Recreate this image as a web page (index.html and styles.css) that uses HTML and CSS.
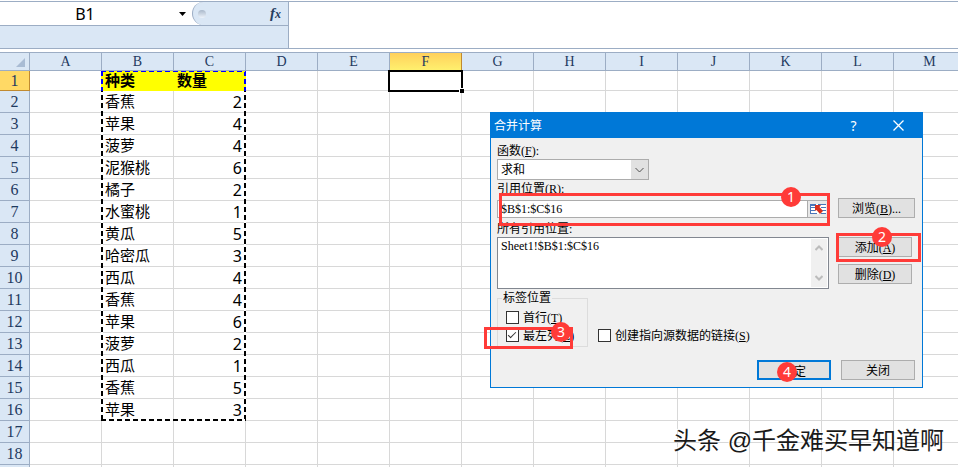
FILE: index.html
```
<!DOCTYPE html>
<html lang="zh-CN">
<head>
<meta charset="utf-8">
<title>合并计算</title>
<link rel="stylesheet" href="styles.css">
</head>
<body>
	<div class="formula-bar">
		<div class="name-area">
			<div class="name-row">
				<input class="name-box" type="text" value="B1" aria-label="名称框">
				<button class="name-arrow" aria-label="名称列表"><svg width="8" height="4" viewBox="0 0 8 4"><path d="M0 0h7L3.500 4z"/></svg></button>
				<div class="fx-area">
					<span class="knob"></span>
					<button class="fx" aria-label="插入函数">f<small>x</small></button>
				</div>
			</div>
		</div>
		<input class="formula" type="text" aria-label="编辑栏">
	</div>

	<div class="sheet">
		<table class="grid">
			<thead><tr id="letters"><th class="corner"><svg width="9" height="9" viewBox="0 0 9 9"><path d="M9 0v9H0z"/></svg></th></tr></thead>
			<tbody id="rows"></tbody>
		</table>
		<div class="ants"></div>
		<div class="cursor"></div>
	</div>

	<form class="dialog" onsubmit="return false">
		<div class="title">
			<span class="title-text">合并计算</span>
			<button class="title-btn" type="button">?</button>
			<button class="title-btn" type="button" aria-label="关闭"><svg width="11" height="11" viewBox="0 0 11 11"><path d="M.5.5l10 10M10.500.5l-10 10"/></svg></button>
		</div>
		<div class="body">
			<div class="main">
				<label for="func">函数(<u>F</u>):</label>
				<div class="select">
					<select id="func"><option>求和</option></select>
					<svg class="select-arrow" width="9" height="6" viewBox="0 0 9 6"><path d="M.5 1l4 4 4-4"/></svg>
				</div>
				<label for="ref">引用位置(<u>R</u>):</label>
				<div class="ref">
					<input id="ref" type="text" value="$B$1:$C$16">
					<button class="pick" type="button" aria-label="选择区域">
						<svg width="16" height="12" viewBox="0 0 16 12">
							<path fill="#fff" d="M0 1h16v10H0z"/>
							<path fill="#4a75b8" d="M0 1h6v2H0zM8 1h8v1H8zM0 4h5v1H0zM11 4h5v1h-5zM0 7h5v1H0zM12 7h4v1h-4zM0 10h7v1H0zM11 10h5v1h-5zM0 1h1v10H0z"/>
							<path fill="#d8301c" d="M5 2h6L9.500 4l3.500 4-3 3-3.500-4L5 8z"/>
						</svg>
					</button>
				</div>
				<label for="all">所有引用位置:</label>
				<div class="list">
					<textarea id="all" readonly>Sheet1!$B$1:$C$16</textarea>
					<div class="scroll">
						<svg width="8" height="6" viewBox="0 0 8 6"><path d="M.5 5L4 1.500 7.500 5"/></svg>
						<svg width="8" height="6" viewBox="0 0 8 6"><path d="M.5 1L4 4.500 7.500 1"/></svg>
					</div>
				</div>
				<div class="options">
					<fieldset>
						<legend>标签位置</legend>
						<label class="check"><input type="checkbox"><span>首行(<u>T</u>)</span></label>
						<label class="check"><input type="checkbox" checked><span>最左列(<u>L</u>)</span></label>
					</fieldset>
					<label class="check"><input type="checkbox"><span>创建指向源数据的链接(<u>S</u>)</span></label>
				</div>
			</div>
			<div class="side">
				<button type="button" class="browse">浏览(<u>B</u>)...</button>
				<button type="button">添加(<u>A</u>)</button>
				<button type="button">删除(<u>D</u>)</button>
			</div>
		</div>
		<div class="footer">
			<button class="ok">确定</button>
			<button type="button">关闭</button>
		</div>
		<div class="frame frame-1"></div>
		<div class="frame frame-2"></div>
		<div class="frame frame-3"></div>
		<span class="step step-1">1</span>
		<span class="step step-2">2</span>
		<span class="step step-3">3</span>
		<span class="step step-4">4</span>
	</form>

	<div class="watermark">头条 @千金难买早知道啊</div>
	<script src="script.js"></script>
</body>
</html>
```
FILE: styles.css
```
body{
	margin: 0;
	height: 100vh;
	overflow: hidden;
	position: relative;
	display: flex;
	flex-direction: column;
	background: white;
	font-family: "Liberation Sans", "Noto Sans CJK SC", sans-serif;
}

input, button, select, textarea{
	margin: 0;
	padding: 0;
	border: 0;
	border-radius: 0;
	outline: 0;
	background: none;
	font: inherit;
	color: inherit;
	box-sizing: border-box;
}

/* formula bar */
.formula-bar{
	display: flex;
	height: 46px;
	flex: none;
	border-top: solid #9cadc4 1px;
	border-bottom: solid #9cadc4 1px;
	margin-top: 1px;
}

.name-area{
	width: 288px;
	background: #dae7f5;
	border-right: solid #9cadc4 1px;
}

.name-row{
	display: flex;
	height: 23px;
	border-bottom: solid #9cadc4 1px;
	background: white;
}

.name-box{
	width: 174px;
	padding-right: 4px;
	text-align: center;
	font: 16px "Noto Sans", sans-serif;
}

.name-arrow{
	width: 18px;
	display: flex;
	align-items: center;
	justify-content: center;
}

.fx-area{
	flex: 1;
	display: flex;
	align-items: center;
	justify-content: space-between;
	padding: 0 7px 0 5px;
	background: #dae7f5;
	border-left: solid #9cadc4 1px;
	border-radius: 12px 0 0 12px;
}

.knob{
	width: 8px;
	height: 8px;
	border-radius: 4px;
	background: linear-gradient(#a9b8ca, #eef4fb);
}

.fx{
	font: italic bold 15px "Liberation Serif", serif;
	color: #26405f;
}

.fx small{
	font-size: 12px;
}

.formula{
	flex: 1;
}

/* sheet */
.sheet{
	position: relative;
	flex: 1;
	margin-top: 3px;
	overflow: hidden;
	border-top: solid #9cadc4 1px;
}

.grid{
	table-layout: fixed;
	width: 966px;
	border-collapse: separate;
	border-spacing: 0;
}

.grid th, .grid td{
	box-sizing: border-box;
	height: 22px;
	padding: 2px 3px 0;
	border-right: solid #d8d8d8 1px;
	border-bottom: solid #d8d8d8 1px;
	font-size: 15px;
	line-height: 18px;
	text-align: left;
	vertical-align: top;
	white-space: nowrap;
}

.grid th{
	padding: 0;
	background: #dae7f5;
	border-color: #9cadc4;
	color: #1f3a5f;
	font: 16px "Liberation Serif", serif;
	line-height: 21px;
	text-align: center;
}

.grid thead th{
	height: 18px;
	font-size: 14px;
	line-height: 17px;
}

.grid .corner{
	width: 30px;
	padding: 5px 4px 0 0;
	text-align: right;
	line-height: 0;
}

.corner path{
	fill: #a9bcd4;
}

.grid tbody tr:first-child > *{
	height: 20px;
	padding-top: 0;
	line-height: 19px;
}

.grid .num{
	padding-top: 2px;
	text-align: right;
	font: 16px "Noto Sans", sans-serif;
	line-height: 18px;
}

.grid .head{
	background: #ffff00;
	border-color: #ffff00;
	font-weight: bold;
}

.grid thead .active{
	background: linear-gradient(#ffd05c, #fff06e);
	border-color: #c08a30;
}

.grid tbody .active{
	background: #ffd965;
	border-color: #c08a30;
}

/* marching ants round the copied range */
.ants{
	position: absolute;
	left: 101px;
	top: 18px;
	width: 145px;
	height: 350px;
	background:
		repeating-linear-gradient(90deg, #0000ff 0 5px, #ffff00 5px 8px) 0 0 / 100% 1px no-repeat,
		repeating-linear-gradient(90deg, black 0 5px, white 5px 8px) 0 100% / 100% 2px no-repeat,
		repeating-linear-gradient(#0000ff 0 5px, #ffff00 5px 8px) 0 0 / 2px 20px no-repeat,
		repeating-linear-gradient(#0000ff 0 5px, #ffff00 5px 8px) 100% 0 / 2px 20px no-repeat,
		repeating-linear-gradient(black 0 5px, white 5px 8px) 0 0 / 2px 100% no-repeat,
		repeating-linear-gradient(black 0 5px, white 5px 8px) 100% 0 / 2px 100% no-repeat;
}

.cursor{
	position: absolute;
	left: 388px;
	top: 17px;
	width: 75px;
	height: 22px;
	box-sizing: border-box;
	border: solid black 2px;
}

.cursor::after{
	content: "";
	position: absolute;
	right: -3px;
	bottom: -3px;
	width: 4px;
	height: 4px;
	background: black;
	border: solid white 1px;
	border-right: 0;
	border-bottom: 0;
}

/* dialog */
.dialog{
	position: absolute;
	left: 490px;
	top: 112px;
	width: 433px;
	box-sizing: border-box;
	border: solid #0078d7 1px;
	background: #f0f0f0;
	font: 12px "Liberation Serif", "Noto Sans CJK SC", serif;
	line-height: 16px;
	color: black;
}

.title{
	display: flex;
	align-items: center;
	height: 25px;
	padding: 0 1px 0 3px;
	background: #0078d7;
	color: white;
	font-family: "Noto Sans", "Noto Sans CJK SC", sans-serif;
}

.title-text{
	flex: 1;
}

.title-btn{
	width: 45px;
	font-size: 14px;
	line-height: 16px;
}

.title-btn path{
	fill: none;
	stroke: white;
	stroke-width: 1.3;
}

.body{
	display: flex;
	gap: 9px;
	padding: 5px 7px 0 6px;
}

.main{
	flex: 1;
	display: flex;
	flex-direction: column;
}

.select{
	display: flex;
	align-items: center;
	width: 152px;
	height: 21px;
	margin-bottom: 1px;
	box-sizing: border-box;
	border: solid #acacac 1px;
	background: linear-gradient(#e1e1e1, #e1e1e1) 100% 0 / 17px 100% no-repeat white;
}

.select select{
	flex: 1;
	height: 19px;
	padding-left: 3px;
	appearance: none;
}

.select-arrow{
	margin-right: 4px;
	fill: none;
	stroke: #505050;
}

.ref{
	display: flex;
	height: 18px;
	margin: 3px 0;
	box-sizing: border-box;
	border: solid #acacac 1px;
	background: white;
}

.ref input{
	flex: 1;
	min-width: 0;
	padding-left: 3px;
}

.pick{
	display: flex;
	flex: none;
	align-items: center;
	width: 21px;
	padding-left: 2px;
	background: #e8e8e8;
	border-left: solid #acacac 1px;
}

.list{
	display: flex;
	height: 52px;
	box-sizing: border-box;
	border: solid #828790 1px;
	background: white;
}

.list textarea{
	flex: 1;
	height: 48px;
	padding-left: 3px;
	resize: none;
	overflow: hidden;
}

.scroll{
	display: flex;
	flex-direction: column;
	align-items: center;
	justify-content: space-between;
	width: 16px;
	margin: 1px;
	padding: 6px 0;
	box-sizing: border-box;
	background: #f0f0f0;
}

.scroll path{
	fill: none;
	stroke: #bcbcbc;
	stroke-width: 2;
}

.options{
	display: flex;
	align-items: flex-end;
	gap: 10px;
	margin-top: 1px;
}

fieldset{
	margin: 0;
	width: 91px;
	box-sizing: border-box;
	padding: 2px 0 2px 8px;
	border: solid #dcdcdc 1px;
}

legend{
	margin-left: -4px;
	padding: 0 1px;
}

.check{
	display: flex;
	align-items: center;
	gap: 4px;
	height: 18px;
	white-space: nowrap;
}

.check span{
	padding-top: 1px;
}

.options > .check{
	padding-bottom: 3px;
}

.check input{
	appearance: none;
	width: 13px;
	height: 13px;
	flex: none;
	border: solid #333 1px;
	background: white;
}

.check input:checked::after{
	content: "";
	display: block;
	width: 7px;
	height: 3px;
	margin: 2px 0 0 1px;
	border: solid #333;
	border-width: 0 0 1px 1px;
	transform: rotate(-45deg);
}

.side{
	display: flex;
	flex-direction: column;
	align-items: flex-start;
	gap: 7px;
	width: 77px;
	padding-top: 55px;
}

.side button, .footer button{
	width: 74px;
	height: 20px;
	padding-top: 2px;
	background: #e1e1e1;
	border: solid #adadad 1px;
}

.side .browse{
	width: 77px;
	margin-bottom: 12px;
}

.footer{
	display: flex;
	justify-content: flex-end;
	gap: 10px;
	padding: 13px 7px 7px;
}

.footer .ok{
	border: solid #0078d7 2px;
}

/* numbered steps drawn over the dialog */
.frame{
	position: absolute;
	box-sizing: border-box;
	border: solid #ff3b38 3px;
}

.frame-1{
	left: 8px;
	top: 80px;
	width: 331px;
	height: 33px;
}

.frame-2{
	left: 345px;
	top: 120px;
	width: 85px;
	height: 29px;
}

.frame-3{
	left: -7px;
	top: 214px;
	width: 89px;
	height: 22px;
}

.step{
	position: absolute;
	width: 20px;
	height: 20px;
	border-radius: 10px;
	background: #ff3b38;
	color: white;
	font: 14px "Noto Sans", sans-serif;
	line-height: 20px;
	text-align: center;
}

.step-1{
	left: 290px;
	top: 74px;
}

.step-2{
	left: 381px;
	top: 114px;
}

.step-3{
	left: 60px;
	top: 209px;
}

.step-4{
	left: 286px;
	top: 249px;
}

.watermark{
	position: absolute;
	right: 14px;
	bottom: 9px;
	font: 24px "Liberation Sans", "Noto Sans CJK SC", sans-serif;
	line-height: 34px;
	color: #1a1a1a;
	text-shadow: -1px -1px 0 white;
}
```
FILE: script.js
```
var letters = "ABCDEFGHIJKLM".split("");
var data = [
	["种类", "数量"],
	["香蕉", 2],
	["苹果", 4],
	["菠萝", 4],
	["泥猴桃", 6],
	["橘子", 2],
	["水蜜桃", 1],
	["黄瓜", 5],
	["哈密瓜", 3],
	["西瓜", 4],
	["香蕉", 4],
	["苹果", 6],
	["菠萝", 2],
	["西瓜", 1],
	["香蕉", 5],
	["苹果", 3]
];

function cell(row, tag, text, name){
	var el = document.createElement(tag);
	el.textContent = text;
	if(name){
		el.className = name;
	}
	row.appendChild(el);
}

letters.forEach(function (letter){
	cell(document.getElementById("letters"), "th", letter, letter == "F" ? "active" : "");
});

// the last row is only a sliver at the window's edge, so it has no number
for(var r = 0; r < 19; r++){
	var row = document.createElement("tr");
	cell(row, "th", r < 18 ? r + 1 : "", r == 0 ? "active" : "");

	for(var c = 0; c < letters.length; c++){
		var value = "";
		var name = "";
		if(data[r] && (c == 1 || c == 2)){
			value = data[r][c - 1];
			name = r == 0 ? "head" : (c == 2 ? "num" : "");
		}
		cell(row, "td", value, name);
	}

	document.getElementById("rows").appendChild(row);
}
```
